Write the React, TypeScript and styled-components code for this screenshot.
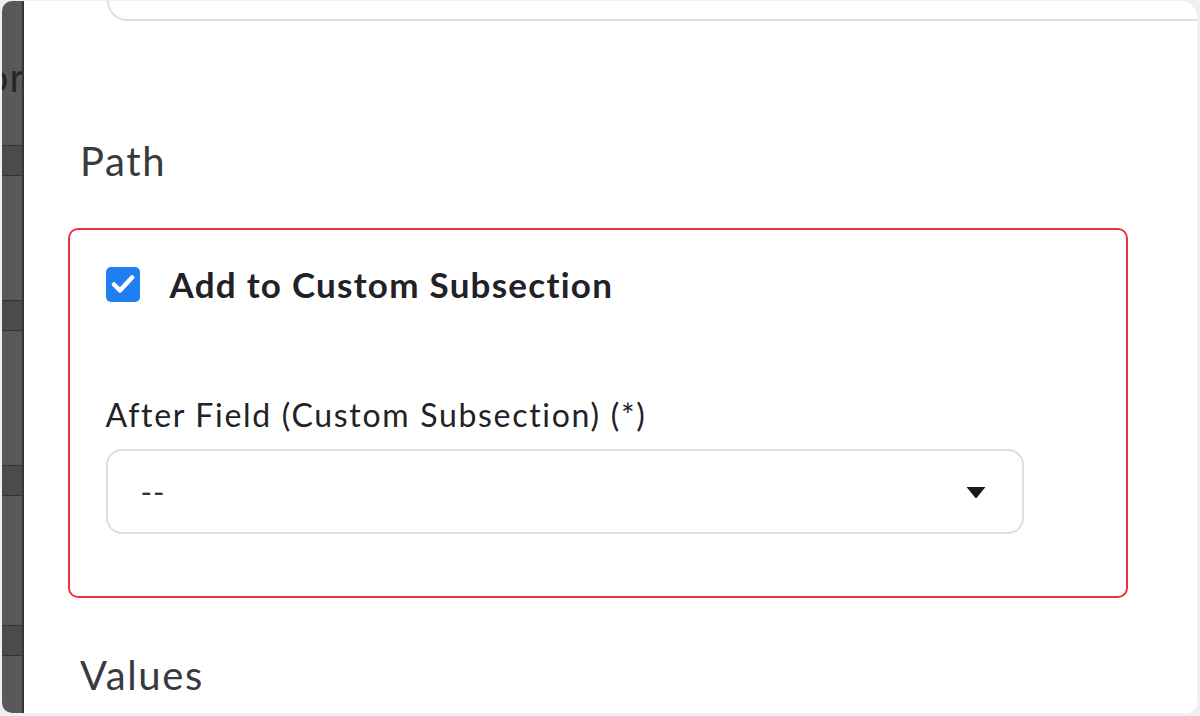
import React from "react";
import styled, { createGlobalStyle } from "styled-components";

const Global = createGlobalStyle`
  html, body { margin: 0; padding: 0; }
  body {
    background: #efeff4;
    font-family: Lato, "Open Sans", sans-serif;
    width: 1200px;
    height: 716px;
    overflow: hidden;
  }
`;

const Screen = styled.div`
  box-sizing: border-box;
  width: 1200px;
  height: 716px;
  padding: 1px 3px 3px 2px;
  display: flex;
`;

const Frame = styled.div`
  flex: 1;
  display: flex;
  background: #ffffff;
  border-radius: 10px 16px 10px 10px;
  overflow: hidden;
`;

const Side = styled.div`
  width: 20px;
  flex: none;
  display: flex;
  flex-direction: column;
  background: #595959;
  border-right: 2px solid #353535;
  overflow: hidden;
`;

const Band = styled.div<{ $h: number; $dark?: boolean }>`
  flex: none;
  height: ${(p) => p.$h}px;
  box-sizing: border-box;
  background: ${(p) => (p.$dark ? "#4b4b4d" : "transparent")};
  border-top: ${(p) => (p.$dark ? "1px solid #333" : "none")};
  border-bottom: ${(p) => (p.$dark ? "1px solid #333" : "none")};
  display: flex;
  justify-content: flex-end;
  align-items: flex-start;
`;

const SideText = styled.span`
  font-size: 40px;
  line-height: 1;
  color: #2a2522;
  white-space: nowrap;
  margin-top: 56px;
  margin-right: -3px;
  letter-spacing: 1px;
`;

const Main = styled.div`
  flex: 1;
  display: flex;
  flex-direction: column;
  padding-left: 56px;
  overflow: hidden;
`;

const TopInput = styled.div`
  height: 18px;
  margin-left: 27px;
  margin-right: -40px;
  border: 2px solid #dedede;
  border-top: none;
  border-radius: 0 0 0 22px;
  flex: none;
`;

const Heading = styled.div<{ $mt: number }>`
  font-size: 40px;
  line-height: 1;
  color: #383a40;
  margin-top: ${(p) => p.$mt}px;
  font-weight: 400;
  letter-spacing: 1.6px;
`;

const Highlight = styled.div`
  box-sizing: border-box;
  width: 1060px;
  margin-left: -12px;
  margin-top: 47px;
  border: 2.5px solid #f0313f;
  border-radius: 10px;
  padding: 36.5px 35.5px 62.5px;
  display: flex;
  flex-direction: column;
`;

const CheckRow = styled.label`
  display: flex;
  align-items: center;
  gap: 30px;
  height: 35px;
`;

const Box = styled.span`
  width: 34px;
  height: 35px;
  border-radius: 5px;
  background: #1f7ef0;
  display: flex;
  align-items: center;
  justify-content: center;
  flex: none;
`;

const CheckLabel = styled.span`
  font-size: 35px;
  line-height: 1;
  font-weight: 700;
  color: #222226;
  letter-spacing: 1.25px;
`;

const FieldLabel = styled.div`
  font-size: 32px;
  line-height: 1;
  color: #222226;
  margin-top: 97px;
  letter-spacing: 1.7px;
`;

const Select = styled.div`
  box-sizing: border-box;
  width: 918px;
  height: 85px;
  margin-top: 18px;
  border: 2px solid #dedede;
  border-radius: 16px;
  display: flex;
  align-items: center;
  justify-content: space-between;
  padding: 0 34px 0 33px;
`;

const SelectValue = styled.span`
  font-size: 31px;
  line-height: 1;
  color: #333;
  letter-spacing: 1px;
`;

const Caret = styled.svg`
  margin-top: 3px;
  margin-right: 2px;
`;

export default function App() {
  return (
    <>
      <Global />
      <Screen>
        <Frame>
          <Side>
            <Band $h={144}>
              <SideText>Mor</SideText>
            </Band>
            <Band $h={31} $dark />
            <Band $h={124} />
            <Band $h={31} $dark />
            <Band $h={134} />
            <Band $h={31} $dark />
            <Band $h={129} />
            <Band $h={31} $dark />
            <Band $h={60} />
          </Side>
          <Main>
            <TopInput />
            <Heading $mt={120}>Path</Heading>
            <Highlight>
              <CheckRow>
                <Box>
                  <svg width="24" height="20" viewBox="0 0 24 20">
                    <path d="M3 10.5 L9 16.5 L21 3.5" fill="none" stroke="#fff" strokeWidth="4.5" strokeLinecap="round" strokeLinejoin="round" />
                  </svg>
                </Box>
                <CheckLabel>Add to Custom Subsection</CheckLabel>
              </CheckRow>
              <FieldLabel>After Field (Custom Subsection) (*)</FieldLabel>
              <Select>
                <SelectValue>--</SelectValue>
                <Caret width="20" height="11" viewBox="0 0 20 11">
                  <path d="M0.5 0 H19.5 L11 10.5 Q10 11.5 9 10.5 Z" fill="#1a1a1a" />
                </Caret>
              </Select>
            </Highlight>
            <Heading $mt={57}>Values</Heading>
          </Main>
        </Frame>
      </Screen>
    </>
  );
}
